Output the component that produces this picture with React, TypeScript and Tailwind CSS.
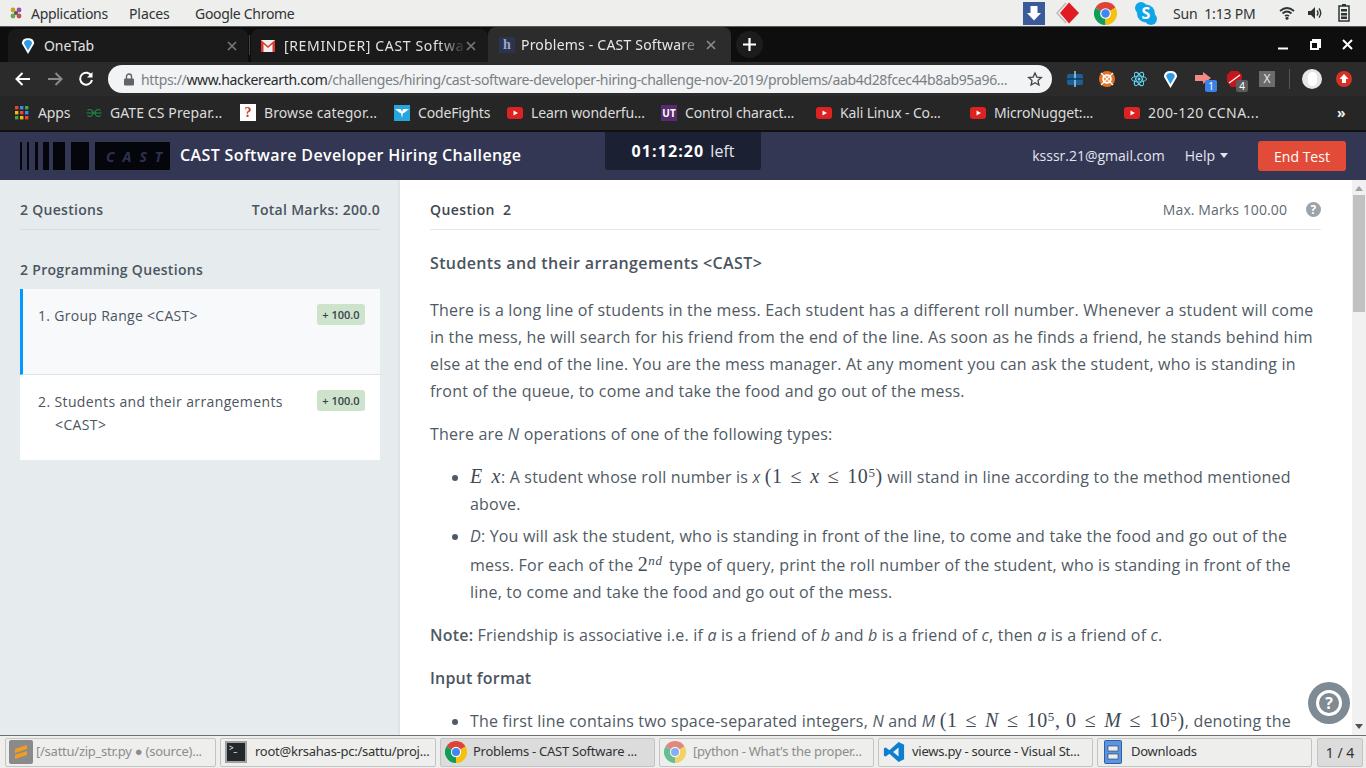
import React from "react";

const ui = { fontFamily: '"Noto Sans", "Liberation Sans", sans-serif' };
const os = { fontFamily: '"Open Sans", "Noto Sans", sans-serif' };
const mathF = { fontFamily: '"Liberation Serif", "DejaVu Serif", serif' };

const M = ({ children, className = "leading-[20px]" }: { children: React.ReactNode; className?: string }) => (
  <span className={`text-[20px] text-[#3f4a55] tracking-[0.6px] ${className}`} style={mathF}>{children}</span>
);
const Rel = () => <span className="mx-[8px] text-[#3f4a55]">≤</span>;
const V = ({ children }: { children: React.ReactNode }) => <i className="italic text-[20px]">{children}</i>;
const Sup = ({ children }: { children: React.ReactNode }) => (
  <sup className="text-[13px] leading-none">{children}</sup>
);
const I = ({ children }: { children: React.ReactNode }) => <em className="italic">{children}</em>;

const Chrome = ({ s = 20 }: { s?: number }) => (
  <svg width={s} height={s} viewBox="0 0 24 24" className="shrink-0">
    <path d="M12 12 L22.4 6 A12 12 0 0 0 1.6 6 Z" fill="#db4437" />
    <path d="M12 12 L1.6 6 A12 12 0 0 0 12 24 Z" fill="#0f9d58" />
    <path d="M12 12 L12 24 A12 12 0 0 0 22.4 6 Z" fill="#f4c20d" />
    <circle cx="12" cy="12" r="5.6" fill="#fff" />
    <circle cx="12" cy="12" r="4.4" fill="#4285f4" />
  </svg>
);

const Yt = () => (
  <svg width="16" height="12" viewBox="0 0 16 12" className="shrink-0">
    <rect width="16" height="12" rx="3" fill="#dd2222" />
    <path d="M6.5 3.5 L11 6 L6.5 8.5 Z" fill="#fff" />
  </svg>
);

const X = ({ c = "#8a8a8a" }: { c?: string }) => (
  <svg width="10" height="10" viewBox="0 0 10 10" className="shrink-0">
    <path d="M1 1 L9 9 M9 1 L1 9" stroke={c} strokeWidth="1.7" />
  </svg>
);

const Diamond = ({ s = 16 }: { s?: number }) => (
  <svg width={s} height={s + 4} viewBox="0 0 16 20" className="shrink-0">
    <path d="M8 19 L1 7 Q1 1 8 1 Q15 1 15 7 Z" fill="#fff" />
    <path d="M8 15 L3.5 7 Q3.5 3 8 3 Q12.5 3 12.5 7 Z" fill="#2e9be6" />
  </svg>
);

function TopBar() {
  return (
    <div className="h-[27px] shrink-0 flex items-center justify-between bg-[#eeeeec] border-b border-[#5a5a5a] text-[14px] text-[#2e3436]" style={ui}>
      <div className="flex items-center pl-[9px]">
        <svg width="14" height="14" viewBox="0 0 14 14" className="mr-[8px]">
          <circle cx="4" cy="4" r="2.4" fill="#c9a227" />
          <circle cx="10" cy="4" r="2.4" fill="#9a4fa8" />
          <circle cx="4" cy="10" r="2.4" fill="#6aa84f" />
          <circle cx="10" cy="10" r="2.4" fill="#c0504d" />
          <circle cx="7" cy="7" r="2" fill="#555" />
        </svg>
        <span className="w-[98px] tracking-[-0.3px]">Applications</span>
        <span className="w-[66px] tracking-[-0.1px]">Places</span>
        <span className="tracking-[-0.3px]">Google Chrome</span>
      </div>
      <div className="flex items-center pr-[16px]">
        <svg width="22" height="23" viewBox="0 0 22 23" className="mr-[10px]">
          <rect width="22" height="23" fill="#3b5a9a" />
          <path d="M7.5 4 H14.5 V11 H18 L11 18.5 L4 11 H7.5 Z" fill="#fff" />
        </svg>
        <svg width="26" height="24" viewBox="0 0 26 24" className="mr-[13px]">
          <path d="M11 2 L2 12 L11 22" fill="none" stroke="#bbb" strokeWidth="1.5" />
          <path d="M14 1.5 L24 12 L14 22.5 L5 12 Z" fill="#e01b24" />
        </svg>
        <span className="mr-[17px]"><Chrome s={23} /></span>
        <svg width="24" height="25" viewBox="0 0 24 25" className="mr-[15px]">
          <circle cx="7" cy="7" r="6" fill="#10a5e8" />
          <circle cx="17" cy="18" r="6" fill="#10a5e8" />
          <circle cx="12" cy="12.5" r="9" fill="#10a5e8" />
          <text x="12" y="18" textAnchor="middle" fontSize="16" fontWeight="700" fill="#fff" style={ui}>S</text>
        </svg>
        <span className="w-[106px] whitespace-pre tracking-[-0.2px]">Sun  1:13 PM</span>
        <svg width="16" height="14" viewBox="0 0 16 14" className="mr-[12px]">
          <path d="M1 5 Q8 -1 15 5 M3.5 7.5 Q8 3.5 12.5 7.5 M6 10 Q8 8.5 10 10" fill="none" stroke="#2e3436" strokeWidth="1.7" />
          <circle cx="8" cy="12.3" r="1.5" fill="#2e3436" />
        </svg>
        <svg width="16" height="14" viewBox="0 0 16 14" className="mr-[15px]">
          <path d="M1 5 H4 L8 1 V13 L4 9 H1 Z" fill="#2e3436" />
          <path d="M10 4.5 Q12 7 10 9.5 M12 2.5 Q15.5 7 12 11.5" fill="none" stroke="#2e3436" strokeWidth="1.4" />
        </svg>
        <svg width="12" height="18" viewBox="0 0 12 18">
          <rect x="4" y="0" width="4" height="2" fill="#2e3436" />
          <rect x="1" y="2" width="10" height="15" fill="none" stroke="#2e3436" strokeWidth="1.5" />
          <rect x="3" y="5" width="6" height="2.5" fill="#2e3436" />
          <rect x="3" y="9" width="6" height="2.5" fill="#2e3436" />
          <rect x="3" y="12.5" width="6" height="2.5" fill="#2e3436" />
        </svg>
      </div>
    </div>
  );
}

function Tabs() {
  return (
    <div className="h-[35px] shrink-0 flex items-end bg-[#0e0e0e] pl-[8px] text-[14px] text-[#e2e2e2]" style={ui}>
      <div className="w-[240px] h-[33px] flex items-center pl-[13px] pr-[11px] bg-[#1a1a1a] rounded-t-[8px]">
        <Diamond s={14} />
        <span className="ml-[9px] flex-1 tracking-[-0.1px]">OneTab</span>
        <X c="#777" />
      </div>
      <div className="w-px h-[20px] bg-[#444] mb-[7px] mx-[1px]" />
      <div className="w-[237px] h-[33px] flex items-center pl-[10px] pr-[12px] bg-[#1a1a1a] rounded-t-[8px]">
        <svg width="14" height="12" viewBox="0 0 14 12" className="shrink-0">
          <rect width="14" height="12" fill="#eee" />
          <path d="M0 0 L7 6 L14 0 V12 H11.5 V4 L7 8 L2.5 4 V12 H0 Z" fill="#d93a2e" />
        </svg>
        <span className="ml-[9px] flex-1 whitespace-nowrap tracking-[0.65px] [mask-image:linear-gradient(to_right,black_85%,transparent)]">[REMINDER] CAST Softwa</span>
        <X c="#777" />
      </div>
      <div className="w-[243px] h-[35px] flex items-center pl-[11px] pr-[15px] bg-[#2c2c2c] rounded-t-[8px] text-[#e8e8e8]">
        <span className="w-[16px] h-[16px] shrink-0 bg-[#2b3350] text-[#9aa5c8] text-[14px] leading-[16px] text-center font-bold" style={mathF}>h</span>
        <span className="ml-[6px] flex-1 whitespace-nowrap tracking-[0.2px] [mask-image:linear-gradient(to_right,black_85%,transparent)]">Problems - CAST Software</span>
        <X c="#8a8a8a" />
      </div>
      <div className="ml-[5px] mb-[4px] w-[27px] h-[27px] rounded-full bg-[#1c1c1c] flex items-center justify-center">
        <svg width="13" height="13" viewBox="0 0 13 13"><path d="M6.5 0 V13 M0 6.5 H13" stroke="#fff" strokeWidth="2.2" /></svg>
      </div>
      <div className="flex-1" />
      <div className="flex items-center h-[35px] pr-[13px] gap-[21px]">
        <svg width="11" height="11" viewBox="0 0 11 11"><path d="M0 9.5 H10" stroke="#fff" strokeWidth="2" /></svg>
        <svg width="11" height="11" viewBox="0 0 11 11"><path d="M3 3 V1 H10 V8 H8 M1 3 H8 V10 H1 Z" fill="none" stroke="#fff" strokeWidth="2" /></svg>
        <svg width="11" height="11" viewBox="0 0 11 11"><path d="M1 1 L10 10 M10 1 L1 10" stroke="#fff" strokeWidth="2" /></svg>
      </div>
    </div>
  );
}

function AddressBar() {
  return (
    <div className="h-[34px] shrink-0 flex items-center bg-[#2b2b2b] pl-[15px]" style={ui}>
      <svg width="16" height="14" viewBox="0 0 16 14"><path d="M15 7 H2 M7.5 1 L1.5 7 L7.5 13" fill="none" stroke="#fff" strokeWidth="2" /></svg>
      <svg width="16" height="14" viewBox="0 0 16 14" className="ml-[16px]"><path d="M1 7 H14 M8.5 1 L14.5 7 L8.5 13" fill="none" stroke="#8a8a8a" strokeWidth="2" /></svg>
      <svg width="16" height="16" viewBox="0 0 16 16" className="ml-[15px]">
        <path d="M13.5 5 A6 6 0 1 0 14 9" fill="none" stroke="#fff" strokeWidth="2" />
        <path d="M14.5 1 V6.5 H9 Z" fill="#fff" />
      </svg>
      <div className="ml-[14px] w-[944px] h-[28px] rounded-full bg-[#f1f3f4] flex items-center pl-[16px] pr-[9px] text-[14px]">
        <svg width="10" height="13" viewBox="0 0 10 13" className="shrink-0">
          <path d="M2.5 6 V3.5 A2.5 2.5 0 0 1 7.5 3.5 V6" fill="none" stroke="#5f6368" strokeWidth="1.4" />
          <rect y="5.5" width="10" height="7" rx="1" fill="#5f6368" />
        </svg>
        <span className="ml-[7px] flex-1 whitespace-nowrap text-[#7b7f83] tracking-[-0.35px]">
          https://<span className="text-[#2a2a2a]">www.hackerearth.com</span>/challenges/hiring/cast-software-developer-hiring-challenge-nov-2019/problems/aab4d28fcec44b8ab95a96...
        </span>
        <svg width="16" height="16" viewBox="0 0 24 24" className="shrink-0">
          <path d="M12 3 L14.8 9.2 L21.5 9.9 L16.5 14.4 L17.9 21 L12 17.6 L6.1 21 L7.5 14.4 L2.5 9.9 L9.2 9.2 Z" fill="none" stroke="#444" strokeWidth="2" />
        </svg>
      </div>
      <div className="flex items-center ml-[15px]">
        <svg width="16" height="16" viewBox="0 0 16 16" className="mr-[16px]">
          <rect y="3" width="16" height="11" rx="2" fill="#1f5f92" /><path d="M8 0 V16" stroke="#9ed0f0" strokeWidth="1.5" /><path d="M0 8 H16" stroke="#0d3a5c" strokeWidth="1.5" />
        </svg>
        <svg width="16" height="16" viewBox="0 0 16 16" className="mr-[16px]">
          <circle cx="8" cy="8" r="8" fill="#e8711f" /><circle cx="8" cy="8" r="3.8" fill="none" stroke="#fff" strokeWidth="2" /><path d="M2 2 L14 14 M14 2 L2 14" stroke="#fff" strokeWidth="1.2" />
        </svg>
        <svg width="16" height="16" viewBox="0 0 16 16" className="mr-[16px]">
          <circle cx="8" cy="8" r="1.5" fill="#61dafb" />
          <g fill="none" stroke="#61dafb" strokeWidth="0.9">
            <ellipse cx="8" cy="8" rx="7.5" ry="3" />
            <ellipse cx="8" cy="8" rx="7.5" ry="3" transform="rotate(60 8 8)" />
            <ellipse cx="8" cy="8" rx="7.5" ry="3" transform="rotate(120 8 8)" />
          </g>
        </svg>
        <span className="mr-[17px]"><Diamond s={15} /></span>
        <span className="relative mr-[14px] w-[18px] h-[16px]">
          <svg width="16" height="12" viewBox="0 0 16 12" className="absolute left-0 top-[1px]"><path d="M0 3 H8 V0 L16 6 L8 12 V9 H0 Z" fill="#f28b82" /></svg>
          <span className="absolute left-[10px] top-[9px] w-[12px] h-[12px] bg-[#3b82e8] text-white text-[10px] leading-[12px] text-center rounded-[2px]">1</span>
        </span>
        <span className="relative mr-[14px] w-[18px] h-[16px]">
          <svg width="15" height="16" viewBox="0 0 15 16" className="absolute left-0 top-0"><path d="M4 0 H11 L15 4 V11 L11 16 H4 L0 11 V4 Z" fill="#c4161c" /><path d="M2 12 L13 4" stroke="#fff" strokeWidth="1.2" /></svg>
          <span className="absolute left-[9px] top-[9px] w-[12px] h-[12px] bg-[#5c5c5c] text-white text-[10px] leading-[12px] text-center rounded-[2px]">4</span>
        </span>
        <span className="w-[16px] h-[16px] bg-[#6b6b6b] text-[#e8e8e8] text-[12px] leading-[16px] text-center">X</span>
        <span className="w-px h-[20px] bg-[#555] ml-[14px] mr-[12px]" />
        <span className="w-[20px] h-[20px] rounded-full bg-[#e6e6e6] flex items-center justify-center mr-[14px]">
          <span className="w-[9px] h-[14px] rounded-full bg-white" />
        </span>
        <svg width="16" height="16" viewBox="0 0 16 16">
          <circle cx="8" cy="8" r="8" fill="#d93025" /><path d="M8 3 L12.5 8 H10 V12 H6 V8 H3.5 Z" fill="#fff" />
        </svg>
      </div>
    </div>
  );
}

const BM = ({ icon, label, w, t = -0.15 }: { icon: React.ReactNode; label: string; w: number; t?: number }) => (
  <div className="flex items-center shrink-0" style={{ width: w }}>
    <span className="w-[16px] flex justify-center shrink-0">{icon}</span>
    <span className="ml-[8px] whitespace-nowrap" style={{ letterSpacing: t }}>{label}</span>
  </div>
);

function Bookmarks() {
  return (
    <div className="h-[34px] shrink-0 flex items-center bg-[#262626] pl-[14px] pb-[1px] text-[14px] text-[#dcdcdc]" style={ui}>
      <BM w={72} label="Apps" icon={
        <svg width="14" height="14" viewBox="0 0 14 14">
          {[0, 5, 10].map((x, i) => [0, 5, 10].map((y, j) => (
            <rect key={`${i}${j}`} x={x} y={y} width="3.4" height="3.4" fill={["#ea4335", "#fbbc05", "#34a853", "#4285f4", "#ea4335", "#fbbc05", "#34a853", "#4285f4", "#ea4335"][i * 3 + j]} />
          )))}
        </svg>} />
      <BM w={154} t={0.1} label="GATE CS Prepar..." icon={
        <svg width="16" height="10" viewBox="0 0 16 10">
          <g fill="none" stroke="#1f8a4c" strokeWidth="1.1">
            <path d="M1.5 2.5 A3.3 3.3 0 1 1 1.5 7.5 M8 5 H0.5" />
            <path d="M14.5 2.5 A3.3 3.3 0 1 0 14.5 7.5 M8 5 H15.5" />
          </g>
        </svg>} />
      <BM w={154} t={0.1} label="Browse categor..." icon={
        <span className="w-[16px] h-[17px] bg-white text-[#c0392b] text-[14px] leading-[17px] text-center font-bold" style={mathF}>?</span>} />
      <BM w={113} label="CodeFights" icon={
        <svg width="16" height="16" viewBox="0 0 16 16"><rect width="16" height="16" fill="#27a6dc" /><path d="M1 4 H7 L8 7 L9 4 H15 L10 8 H9 L8 13 L7 8 H6 Z" fill="#fff" /></svg>} />
      <BM w={154} label="Learn wonderfu..." icon={<Yt />} />
      <BM w={155} label="Control charact..." icon={
        <span className="w-[16px] h-[16px] bg-[#5a2a6e] text-white text-[10px] leading-[16px] text-center font-bold">UT</span>} />
      <BM w={154} label="Kali Linux - Co..." icon={<Yt />} />
      <BM w={154} label="MicroNugget:..." icon={<Yt />} />
      <BM w={213} t={0.45} label="200-120 CCNA..." icon={<Yt />} />
      <span className="text-[#f0f0f0] text-[14px] font-bold">»</span>
    </div>
  );
}

function Logo() {
  const bars: [number, number][] = [[2, 5], [2, 6], [3, 5], [6, 4], [12, 6], [18, 6]];
  return (
    <div className="flex items-stretch h-[28px] w-[150px]">
      {bars.map(([w, g], i) => (
        <span key={i} className="bg-[#05060c]" style={{ width: w, marginRight: g }} />
      ))}
      <div className="flex-1 bg-[#05060c] flex items-center pl-[11px] gap-[8px] italic font-bold text-[14px] text-[#2c3250]" style={os}>
        <span>C</span><span>A</span><span>S</span><span>T</span>
      </div>
    </div>
  );
}

function SiteHeader() {
  return (
    <div className="h-[48px] shrink-0 mt-[2px] relative flex items-center bg-[#343754] pl-[20px] pr-[20px]" style={os}>
      <Logo />
      <span className="ml-[10px] pb-[2px] text-[16px] font-semibold text-white tracking-[0.38px]">CAST Software Developer Hiring Challenge</span>
      <div className="flex-1" />
      <span className="text-[14px] text-[#e3e5ee] pb-[1px]">ksssr.21@gmail.com</span>
      <span className="ml-[20px] text-[14px] text-[#e3e5ee] flex items-center pb-[1px]">
        Help
        <svg width="8" height="5" viewBox="0 0 8 5" className="ml-[5px]"><path d="M0 0 H8 L4 5 Z" fill="#e3e5ee" /></svg>
      </span>
      <button className="ml-[30px] w-[88px] h-[30px] rounded-[3px] bg-[#e14b38] text-white text-[14px]">End Test</button>
      <div className="absolute left-[605px] top-0 w-[156px] h-[38px] bg-[#1c2033] rounded-b-[3px] flex items-center justify-center text-[16px] text-white">
        <span className="font-bold tracking-[1.1px]">01:12:20</span>
        <span className="ml-[6px] text-[#e3e5ee]">left</span>
      </div>
    </div>
  );
}

function Sidebar() {
  return (
    <aside className="w-[400px] shrink-0 bg-[#e6ebed] border-r-2 border-[#dfe3e6] pl-[20px] pr-[18px] text-[#4a5560] tracking-[0.3px]" style={os}>
      <div className="h-[50px] pt-[10px] flex items-center justify-between border-b border-[#d8dde0] text-[14px] font-semibold">
        <span>2 Questions</span>
        <span>Total Marks: 200.0</span>
      </div>
      <div className="h-[59px] flex items-end pb-[9px] text-[14px] font-semibold">2 Programming Questions</div>
      <div className="h-[86px] bg-[#f8f9fb] border-l-[3px] border-[#0099ff] border-b border-b-[#dfe3e8] pl-[15px] pr-[15px] pt-[15px] flex justify-between items-start text-[14px]">
        <span className="leading-[23px]">1. Group Range &lt;CAST&gt;</span>
        <span className="h-[21px] w-[48px] rounded-[3px] bg-[#cde3cb] text-[11px] leading-[21px] text-center font-semibold tracking-normal text-[#38424c]">+ 100.0</span>
      </div>
      <div className="h-[85px] bg-white pl-[18px] pr-[15px] pt-[15px] flex justify-between items-start text-[14px]">
        <span className="leading-[23px] pl-[17px] -indent-[17px] w-[250px] tracking-[0.38px]">2. Students and their arrangements &lt;CAST&gt;</span>
        <span className="h-[21px] w-[48px] rounded-[3px] bg-[#cde3cb] text-[11px] leading-[21px] text-center font-semibold tracking-normal text-[#38424c]">+ 100.0</span>
      </div>
    </aside>
  );
}

function Content() {
  return (
    <main className="flex-1 min-w-0 bg-white pl-[30px] pr-[31px] text-[16px] leading-[27px] text-[#505a64] tracking-[0.2px] overflow-hidden" style={os}>
      <div className="h-[50px] pt-[10px] flex items-center border-b border-[#e6e8ea] text-[14px]">
        <span className="font-semibold text-[#3d4750] tracking-[0.4px]">Question&nbsp; 2</span>
        <div className="flex-1" />
        <span className="text-[#5f6973] tracking-[0.1px]">Max. Marks 100.00</span>
        <svg width="15" height="15" viewBox="0 0 14 14" className="ml-[19px]">
          <circle cx="7" cy="7" r="7" fill="#9ca3a9" />
          <text x="7" y="11" textAnchor="middle" fontSize="11" fontWeight="700" fill="#fff" style={os}>?</text>
        </svg>
      </div>
      <h2 className="mt-[20px] font-semibold text-[#4a5560] leading-[27px] tracking-[0.37px]">Students and their arrangements &lt;CAST&gt;</h2>
      <p className="mt-[20px]">There is a long line of students in the mess. Each student has a different roll number. Whenever a student will come in the mess, he will search for his friend from the end of the line. As soon as he finds a friend, he stands behind him else at the end of the line. You are the mess manager. At any moment you can ask the student, who is standing in front of the queue, to come and take the food and go out of the mess.</p>
      <p className="mt-[16px]">There are <I>N</I> operations of one of the following types:</p>
      <ul className="mt-[16px] list-disc pl-[40px]">
        <li className="h-[54px]"><M className="leading-[20px] [word-spacing:3px]"><V>E x</V></M>: A student whose roll number is <I>x</I> <M>(1<Rel /><V>x</V><Rel />10<Sup>5</Sup>)</M> will stand in line according to the method mentioned above.</li>
        <li className="mt-[5px]">
          <I>D</I>: You will ask the student, who is standing in front of the line, to come and take the food and go out of the mess. For each of the <M className="inline-block leading-[27px] pt-[1px] mr-[2px]">2<Sup><i>nd</i></Sup></M> type of query, print the roll number of the student, who is standing in front of the line, to come and take the food and go out of the mess.
        </li>
      </ul>
      <p className="mt-[16px]"><strong className="font-semibold">Note:</strong> Friendship is associative i.e. if <I>a</I> is a friend of <I>b</I> and <I>b</I> is a friend of <I>c</I>, then <I>a</I> is a friend of <I>c</I>.</p>
      <h3 className="mt-[16px] font-semibold text-[#4a5560]">Input format</h3>
      <ul className="mt-[16px] list-disc pl-[40px]">
        <li>The first line contains two space-separated integers, <I>N</I> and <I>M</I> <M>(1<Rel /><V>N</V><Rel />10<Sup>5</Sup>, 0<Rel /><V>M</V><Rel />10<Sup>5</Sup>)</M>, denoting the number of students and friendships.</li>
      </ul>
    </main>
  );
}

function Scrollbar() {
  return (
    <div className="w-[14px] shrink-0 bg-[#f1f1f1] flex flex-col items-center">
      <svg width="8" height="5" viewBox="0 0 8 5" className="mt-[6px] mb-[4px]"><path d="M0 5 H8 L4 0 Z" fill="#a3a3a3" /></svg>
      <div className="w-[12px] h-[117px] bg-[#c1c1c1]" />
      <div className="flex-1" />
      <svg width="8" height="5" viewBox="0 0 8 5" className="mb-[6px]"><path d="M0 0 H8 L4 5 Z" fill="#505050" /></svg>
    </div>
  );
}

const TB = ({ w, icon, label, active, dim, gap = 4 }: { w: number; icon: React.ReactNode; label: string; active?: boolean; dim?: boolean; gap?: number }) => (
  <div className={`shrink-0 h-[29px] mr-[4px] flex items-center pl-[3px] rounded-[2px] border border-[#c4c4c4] ${active ? "bg-[#dcdcdc] border-[#a8a8a8]" : "bg-[#eeeeec]"} ${dim ? "text-[#8b8d8f]" : "text-[#2e3436]"}`} style={{ width: w }}>
    <span className="w-[24px] flex justify-center shrink-0">{icon}</span>
    <span className="whitespace-nowrap tracking-[-0.25px]" style={{ marginLeft: gap }}>{label}</span>
  </div>
);

function Taskbar() {
  return (
    <div className="h-[33px] shrink-0 flex items-center bg-[#eeeeec] border-t border-[#6e6e6e] pl-[5px] text-[13px]" style={ui}>
      <TB w={211} gap={3} dim label="[/sattu/zip_str.py ● (source)..." icon={
        <svg width="24" height="24" viewBox="0 0 24 24"><rect width="24" height="24" rx="2" fill="#8a8a8a" /><path d="M18 5 L6 9 V13 L18 9 Z M6 15 L18 11 V15 L6 19 Z" fill="#f39c1f" /></svg>} />
      <TB w={216} gap={7} label="root@krsahas-pc:/sattu/proj..." icon={
        <span className="w-[22px] h-[22px] bg-[#23282a] border-2 border-[#a0a0a0] text-[8px] leading-[9px] text-white pl-[2px]">&gt;_</span>} />
      <TB w={215} gap={5} active label="Problems - CAST Software ..." icon={<Chrome s={22} />} />
      <TB w={215} gap={6} dim label="[python - What's the proper..." icon={<span className="opacity-60"><Chrome s={22} /></span>} />
      <TB w={215} gap={6} label="views.py - source - Visual St..." icon={
        <svg width="22" height="22" viewBox="0 0 24 24"><path d="M17 1 L23 4 V20 L17 23 L7 14 L3 17 L1 16 V8 L3 7 L7 10 Z M17 7 L11 12 L17 17 Z" fill="#0e7fd0" /></svg>} />
      <TB w={215} gap={6} label="Downloads" icon={
        <svg width="18" height="24" viewBox="0 0 18 24"><rect x="0.5" y="0.5" width="17" height="23" rx="1" fill="#5b94e0" stroke="#2a5fa8" /><rect x="4" y="6" width="10" height="5" fill="#e8eef8" stroke="#333" strokeWidth="0.6" /><rect x="4" y="14" width="10" height="5" fill="#e8eef8" stroke="#333" strokeWidth="0.6" /></svg>} />
      <div className="ml-[1px] w-[46px] h-[29px] bg-[#dcdcdc] rounded-[2px] border border-[#c4c4c4] text-center leading-[27px] text-[14px] text-[#2e3436]">1 / 4</div>
    </div>
  );
}

export default function App() {
  return (
    <div className="h-screen w-full flex flex-col overflow-hidden bg-[#111]">
      <TopBar />
      <Tabs />
      <AddressBar />
      <Bookmarks />
      <SiteHeader />
      <div className="flex-1 min-h-0 flex overflow-hidden relative">
        <Sidebar />
        <Content />
        <Scrollbar />
        <div className="absolute left-[1308px] top-[502px] w-[42px] h-[42px] rounded-full bg-[#7f8a93] flex items-center justify-center">
          <span className="w-[26px] h-[26px] rounded-full border-[3px] border-white text-white text-[16px] leading-[20px] font-bold text-center" style={os}>?</span>
        </div>
      </div>
      <Taskbar />
    </div>
  );
}
